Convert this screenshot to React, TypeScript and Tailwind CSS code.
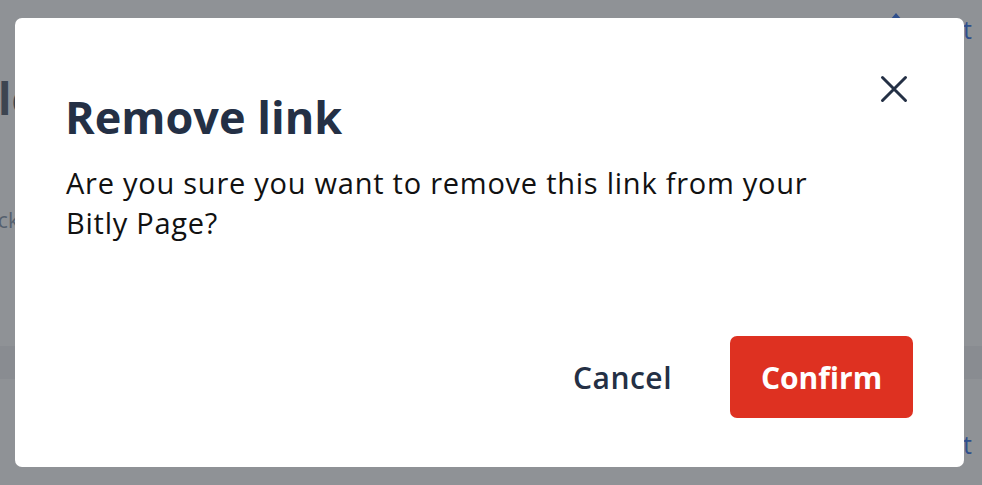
import React from 'react';

export default function App() {
  return (
    <div className="relative w-[982px] h-[485px] overflow-hidden bg-[#8f9296] font-['Open_Sans',sans-serif]">
      {/* Dimmed page behind the dialog */}
      <div className="flex flex-col h-full">
        <div className="flex justify-end items-start gap-[24px] pr-[10px] pt-[14px] h-[70px] text-[#2f4f8c] text-[25px] leading-[30px]">
          <svg width="16" height="22" viewBox="0 0 16 22" className="-mt-[2px]">
            <path d="M8 1 L2 8 H14 Z" fill="#2f4f8c" />
          </svg>
          <span>Edit</span>
        </div>
        <div className="-ml-[60px] text-[#3d4550] text-[44px] font-bold leading-[56px]">Title</div>
        <div className="h-[80px]" />
        <div className="-ml-[26px] text-[#55606e] text-[21px] leading-[28px]">Clicks</div>
        <div className="h-[112px]" />
        <div className="h-[33px] bg-[#898c91]" />
        <div className="h-[50px]" />
        <div className="flex justify-end pr-[10px] text-[#2f4f8c] text-[25px] leading-[30px]">
          <span>Edit</span>
        </div>
      </div>

      {/* Modal */}
      <div className="absolute inset-0 flex items-center pl-[15px]">
        <div className="relative w-[949px] h-[449px] bg-white rounded-[7px] flex flex-col px-[51px] pt-[71px] pb-[49px]">
          <button className="absolute top-[56px] right-[55px] w-[30px] h-[30px] flex items-center justify-center">
            <svg width="28" height="28" viewBox="0 0 28 28" fill="none" stroke="#243045" strokeWidth="3" strokeLinecap="round">
              <path d="M2.5 2.5 L25.5 25.5 M25.5 2.5 L2.5 25.5" />
            </svg>
          </button>
          <h2 className="text-[45px] leading-[56px] font-bold text-[#243045] -ml-[1px]">Remove link</h2>
          <p className="mt-[18px] text-[29px] leading-[40px] tracking-[0.75px] text-[#111] w-[770px]">
            Are you sure you want to remove this link from your Bitly Page?
          </p>
          <div className="mt-auto flex items-center justify-end gap-[20px]">
            <button className="h-[82px] px-[38px] text-[30px] font-semibold text-[#243045] tracking-[0.5px]">Cancel</button>
            <button className="h-[82px] w-[183px] rounded-[7px] bg-[#de3121] text-white text-[30px] font-bold">Confirm</button>
          </div>
        </div>
      </div>
    </div>
  );
}
